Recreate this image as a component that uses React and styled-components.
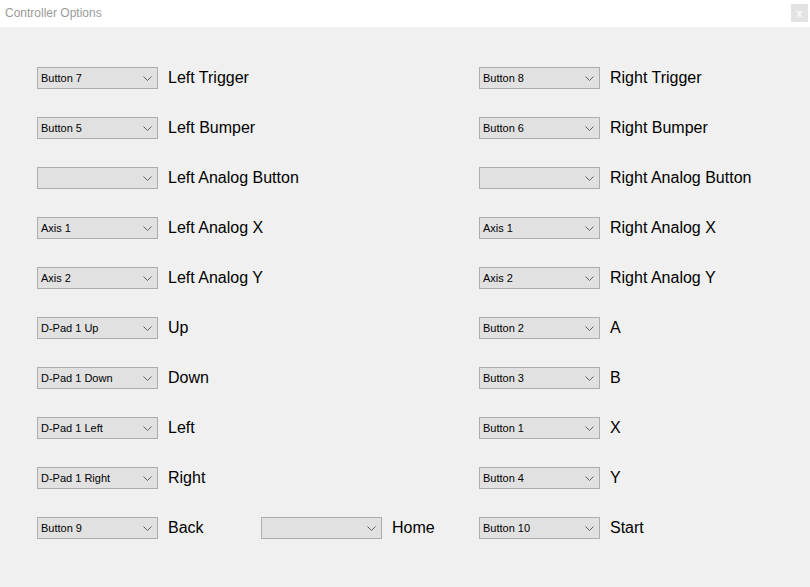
import styled, { createGlobalStyle } from 'styled-components'

const GlobalStyle = createGlobalStyle`
  html, body {
    margin: 0;
    padding: 0;
    background: #f0f0f0;
  }
  * {
    box-sizing: border-box;
  }
`

// 左右两列的映射
const rows = [
  [['Button 7', 'Left Trigger'], ['Button 8', 'Right Trigger']],
  [['Button 5', 'Left Bumper'], ['Button 6', 'Right Bumper']],
  [['', 'Left Analog Button'], ['', 'Right Analog Button']],
  [['Axis 1', 'Left Analog X'], ['Axis 1', 'Right Analog X']],
  [['Axis 2', 'Left Analog Y'], ['Axis 2', 'Right Analog Y']],
  [['D-Pad 1 Up', 'Up'], ['Button 2', 'A']],
  [['D-Pad 1 Down', 'Down'], ['Button 3', 'B']],
  [['D-Pad 1 Left', 'Left'], ['Button 1', 'X']],
  [['D-Pad 1 Right', 'Right'], ['Button 4', 'Y']],
]

const Chevron = () => (
  <svg width='9' height='5' viewBox='0 0 9 5'>
    <polyline
      points='0.5,0.5 4.5,4.5 8.5,0.5'
      fill='none'
      stroke='#606060'
      strokeWidth='1'
    />
  </svg>
)

const Field = ({ value, label, width }) => {
  return (
    <FieldWrap $width={width}>
      <Combo>
        <span>{value}</span>
        <Chevron />
      </Combo>
      <Label>{label}</Label>
    </FieldWrap>
  )
}

const App = () => {
  return (
    <Window>
      <GlobalStyle />
      <TitleBar>
        <Title>Controller Options</Title>
        <CloseButton>x</CloseButton>
      </TitleBar>
      <Content>
        {rows.map((row, index) => (
          <Row key={index}>
            <Field value={row[0][0]} label={row[0][1]} width={442} />
            <Field value={row[1][0]} label={row[1][1]} />
          </Row>
        ))}
        <Row>
          <Field value='Button 9' label='Back' width={224} />
          <Field value='' label='Home' width={218} />
          <Field value='Button 10' label='Start' />
        </Row>
      </Content>
    </Window>
  )
}

const Window = styled.div`
  width: 810px;
  height: 587px;
  background: #f0f0f0;
  display: flex;
  flex-direction: column;
  overflow: hidden;
`

const TitleBar = styled.div`
  height: 27px;
  background: #ffffff;
  display: flex;
  align-items: center;
  justify-content: space-between;
  padding: 0 2px 1px 5px;
`

const Title = styled.div`
  font-family: 'Liberation Sans', Arial, sans-serif;
  font-size: 12px;
  color: #9a9a9a;
`

const CloseButton = styled.div`
  width: 17px;
  height: 18px;
  background: #e3e3e3;
  color: #f8f8f8;
  font-family: 'DejaVu Sans', sans-serif;
  font-size: 10px;
  font-weight: bold;
  display: flex;
  align-items: center;
  justify-content: center;
`

const Content = styled.div`
  flex: 1;
  display: flex;
  flex-direction: column;
  gap: 28px;
  padding: 40px 0 0 37px;
`

const Row = styled.div`
  display: flex;
  align-items: center;
  height: 22px;
`

const FieldWrap = styled.div`
  display: flex;
  align-items: center;
  gap: 10px;
  flex: ${(props) => (props.$width ? `0 0 ${props.$width}px` : '1')};
`

const Combo = styled.div`
  width: 121px;
  height: 22px;
  flex: 0 0 121px;
  border: 1px solid #adadad;
  background: #e1e1e1;
  display: flex;
  align-items: center;
  justify-content: space-between;
  padding: 0 5px 0 3px;
  font-family: 'Liberation Sans', Arial, sans-serif;
  font-size: 11px;
  color: #000;
`

const Label = styled.div`
  font-family: 'Liberation Sans', Arial, sans-serif;
  font-size: 16px;
  color: #000;
  white-space: nowrap;
`

export default App
